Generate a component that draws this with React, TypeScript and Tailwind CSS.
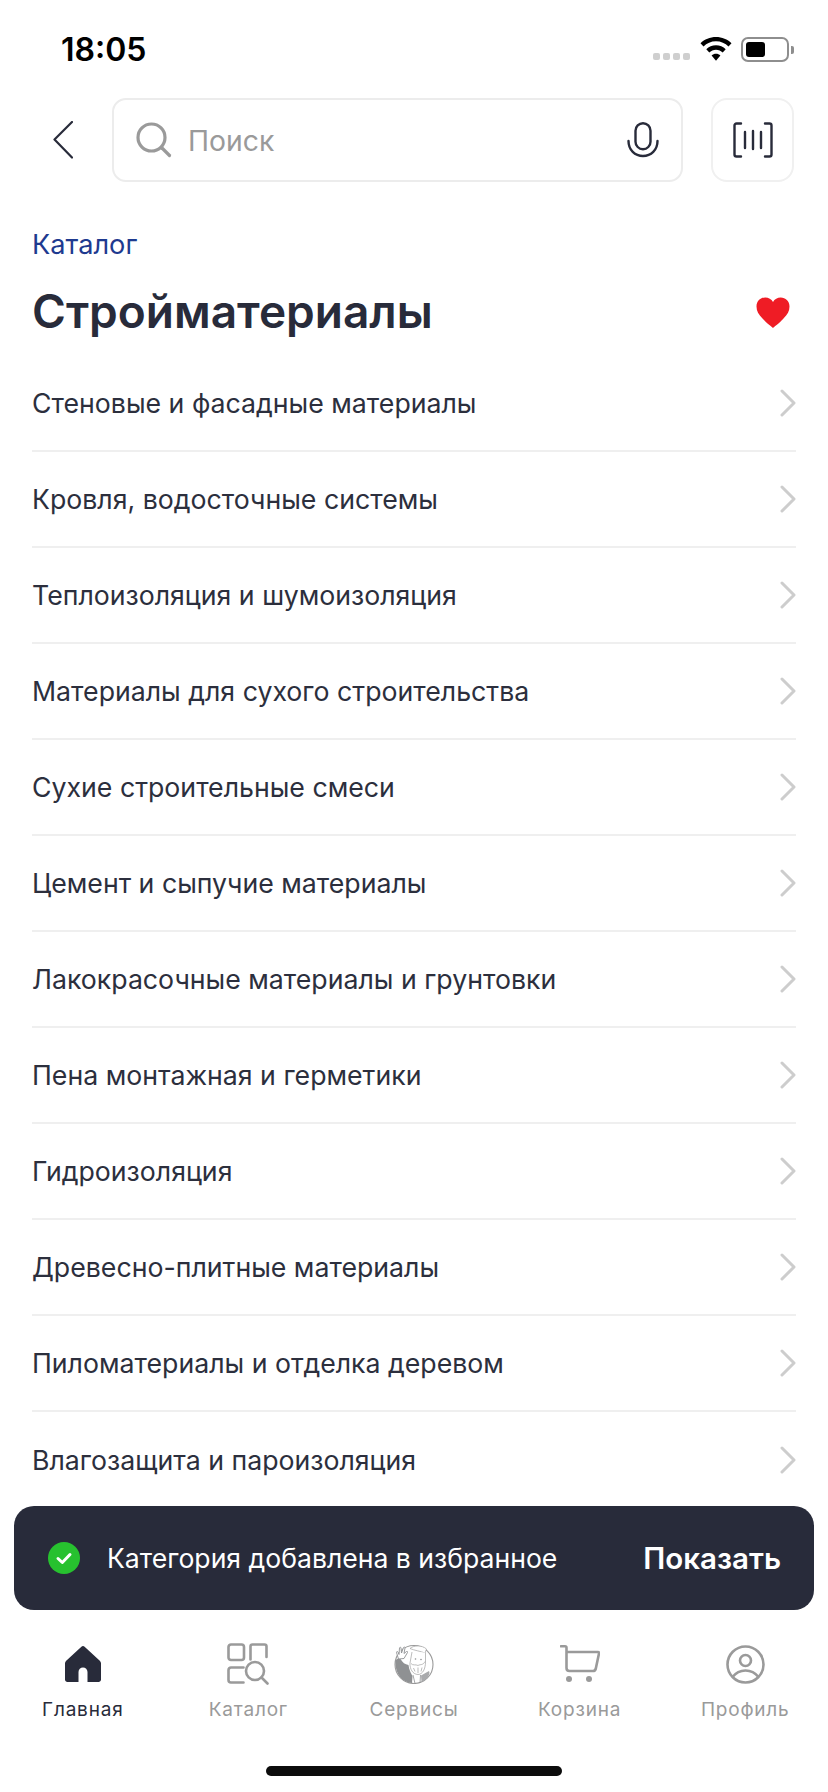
const categories = [
  "Стеновые и фасадные материалы",
  "Кровля, водосточные системы",
  "Теплоизоляция и шумоизоляция",
  "Материалы для сухого строительства",
  "Сухие строительные смеси",
  "Цемент и сыпучие материалы",
  "Лакокрасочные материалы и грунтовки",
  "Пена монтажная и герметики",
  "Гидроизоляция",
  "Древесно-плитные материалы",
  "Пиломатериалы и отделка деревом",
  "Влагозащита и пароизоляция",
]

function StatusBar() {
  return (
    <div className="flex h-[98px] shrink-0 items-start justify-between pl-[61px] pr-[34px] pt-[30px]">
      <span className="text-[32px] leading-[40px] font-semibold text-black">18:05</span>
      <div className="flex items-start pt-[7px]">
        <div className="mt-[16px] mr-[10px] flex gap-[3px]">
          <span className="h-[7px] w-[7px] rounded-[2px] bg-[#cfcfcf]" />
          <span className="h-[7px] w-[7px] rounded-[2px] bg-[#cfcfcf]" />
          <span className="h-[7px] w-[7px] rounded-[2px] bg-[#cfcfcf]" />
          <span className="h-[7px] w-[7px] rounded-[2px] bg-[#cfcfcf]" />
        </div>
        <svg width="32" height="25" viewBox="0 0 32 25" className="mr-[9px]">
          <path d="M16 0C10 0 4.500 2.300 0.500 6.200L3.500 9.500C6.700 6.300 11.100 4.300 16 4.300C20.900 4.300 25.300 6.300 28.500 9.500L31.500 6.200C27.500 2.300 22 0 16 0Z" fill="#000" />
          <path d="M16 8.300C12.200 8.300 8.800 9.800 6.300 12.300L9.300 15.500C11 13.800 13.400 12.700 16 12.700C18.600 12.700 21 13.800 22.700 15.500L25.700 12.300C23.200 9.800 19.800 8.300 16 8.300Z" fill="#000" />
          <path d="M16 16.700C14.300 16.700 12.800 17.300 11.600 18.500L16 23.700L20.400 18.500C19.200 17.300 17.700 16.700 16 16.700Z" fill="#000" />
        </svg>
        <div className="flex items-center">
          <div className="flex h-[25px] w-[48px] rounded-[7px] border-2 border-[#8e8e8e] p-[3px]">
            <div className="h-full w-[19px] rounded-[3px] bg-black" />
          </div>
          <div className="ml-[2px] h-[8px] w-[3px] rounded-r-[2px] bg-[#8e8e8e]" />
        </div>
      </div>
    </div>
  )
}

function SearchHeader() {
  return (
    <div className="flex shrink-0 items-center pl-[53px] pr-[34px]">
      <svg width="20" height="38" viewBox="0 0 20 38" fill="none" className="mr-[39px] shrink-0">
        <path d="M19 1L1.500 18.500L19 36.500" stroke="#282b3a" strokeWidth="2.200" strokeLinecap="round" strokeLinejoin="round" />
      </svg>
      <div className="flex h-[84px] w-[571px] items-center rounded-[14px] border-2 border-[#ececec] pl-[22px] pr-[22px]">
        <svg width="36" height="36" viewBox="0 0 36 36" fill="none" className="mr-[16px] shrink-0">
          <circle cx="15.500" cy="15.500" r="13.500" stroke="#9a9a9a" strokeWidth="3.200" />
          <path d="M26 26L33.500 33.500" stroke="#9a9a9a" strokeWidth="3.200" strokeLinecap="round" />
        </svg>
        <span className="flex-1 translate-y-[1px] text-[28.300px] leading-[36px] text-[#9a9a9a]">Поиск</span>
        <svg width="32" height="36" viewBox="0 0 32 36" fill="none" className="shrink-0">
          <rect x="8.500" y="1.200" width="15" height="26" rx="7.500" stroke="#282b3a" strokeWidth="2.400" />
          <path d="M1.500 19C1.500 28 8 34 16 34C24 34 30.500 28 30.500 19" stroke="#282b3a" strokeWidth="2.400" strokeLinecap="round" />
        </svg>
      </div>
      <div className="ml-[28px] flex h-[84px] w-[83px] items-center justify-center rounded-[16px] border-2 border-[#f0f0f0]">
        <svg width="40" height="36" viewBox="0 0 40 36" fill="none">
          <path d="M8 1.500H3.500C2.400 1.500 1.500 2.400 1.500 3.500V32.500C1.500 33.600 2.400 34.500 3.500 34.500H8" stroke="#282b3a" strokeWidth="2.400" strokeLinecap="round" />
          <path d="M32 1.500H36.500C37.600 1.500 38.500 2.400 38.500 3.500V32.500C38.500 33.600 37.600 34.500 36.500 34.500H32" stroke="#282b3a" strokeWidth="2.400" strokeLinecap="round" />
          <path d="M12 10V26M20 9V27M28 10V26" stroke="#282b3a" strokeWidth="2.400" strokeLinecap="round" />
        </svg>
      </div>
    </div>
  )
}

function RowChevron() {
  return (
    <svg width="16" height="28" viewBox="0 0 16 28" fill="none" className="shrink-0">
      <path d="M2 2L14 14L2 26" stroke="#cdcdcd" strokeWidth="3" strokeLinecap="round" strokeLinejoin="round" />
    </svg>
  )
}

function HomeIcon() {
  return (
    <svg width="36" height="36" viewBox="0 0 36 36">
      <path
        fillRule="evenodd"
        d="M16.400 0.700C17.300 -0.200 18.700 -0.200 19.600 0.700L34.800 14.800C35.600 15.500 36 16.400 36 17.400V33.500C36 34.900 34.900 36 33.500 36H22.500V26C22.500 23.500 20.500 21.500 18 21.500C15.500 21.500 13.500 23.500 13.500 26V36H2.500C1.100 36 0 34.900 0 33.500V17.400C0 16.400 0.400 15.500 1.200 14.800Z"
        fill="#282b3a"
      />
    </svg>
  )
}

function CatalogIcon() {
  return (
    <svg width="42" height="42" viewBox="0 0 42 42" fill="none" stroke="#9a9a9a" strokeWidth="2.600">
      <rect x="1.500" y="1.500" width="15.500" height="15.500" rx="2.500" />
      <path d="M23.500 16.500V3.500C23.500 2.400 24.400 1.500 25.500 1.500H37.500C38.600 1.500 39.500 2.400 39.500 3.500V14" strokeLinecap="round" />
      <path d="M16.500 24.500H4C2.600 24.500 1.500 25.600 1.500 27V37C1.500 38.400 2.600 39.500 4 39.500H16.500" strokeLinecap="round" />
      <circle cx="28" cy="28" r="9" />
      <path d="M34.500 34.500L40.500 40.500" strokeLinecap="round" />
    </svg>
  )
}

function ServicesIcon() {
  return (
    <svg width="40" height="40" viewBox="0 0 40 40" fill="none">
      <circle cx="20" cy="20.500" r="19" stroke="#9a9a9a" strokeWidth="1.100" fill="#fff" />
      <path d="M1.300 17C2.500 15 4 14 6.500 15C8.500 18.500 11 20.500 14.500 21C15 26 17.500 30 18.500 32L18 39C9 38.500 1 31 1.300 17Z" fill="#8f9193" />
      <path d="M27 31.500L35 27C37 30 32 37 27.500 38Z" fill="#a9aaac" />
      <path d="M4.500 15L2.500 8.500C2.300 7.500 3.500 7 4 8L5 10.500L5.500 4C5.700 3 7 3 7 4L7.500 9L9.500 3.500C10 2.700 11 3 11 4L10 9.500L12.500 7.500C13.200 7 14 7.800 13.500 8.500L10 14.500Z" fill="#fff" stroke="#8f9193" strokeWidth="0.900" strokeLinejoin="round" />
      <path d="M16 4.500C20 1 28 1 32.500 5L31 9C26 7 20.500 6.500 16 4.500Z" fill="#fff" stroke="#a0a0a0" strokeWidth="0.700" />
      <path d="M18 8L16 19C15.500 25 19 30.500 24 30.500C28.500 30.500 31.500 25 31.500 18L31.500 8.500" fill="#fff" stroke="#a0a0a0" strokeWidth="0.700" />
      <path d="M17 19.500C19 22 21.500 20 24 21.500C26.500 20 29 21.500 31 17.500M19.500 24L21 27.500M24 23.500V29M28 23.500L27 27.500" stroke="#a0a0a0" strokeWidth="0.700" />
      <circle cx="21.500" cy="15" r="0.800" fill="#8f9193" />
      <circle cx="27" cy="15.500" r="0.800" fill="#8f9193" />
      <path d="M19 31L21 39.500M26.500 31L26 39" stroke="#8f9193" strokeWidth="0.800" />
    </svg>
  )
}

function CartIcon() {
  return (
    <svg width="40" height="38" viewBox="0 0 40 38" fill="none">
      <path d="M1 1.300H5C6 1.300 6.500 1.800 6.500 2.800V23C6.500 25 7.500 26 9.500 26H33C34.500 26 35.300 25.200 35.700 24L39 8.500C39.200 7.500 38.700 7 38 7H6.500" stroke="#9a9a9a" strokeWidth="2.600" strokeLinecap="round" strokeLinejoin="round" />
      <circle cx="9" cy="34" r="3" fill="#9a9a9a" />
      <circle cx="29" cy="34" r="3" fill="#9a9a9a" />
    </svg>
  )
}

function ProfileIcon() {
  return (
    <svg width="39" height="39" viewBox="0 0 39 39" fill="none" stroke="#9a9a9a" strokeWidth="2.600">
      <circle cx="19.500" cy="19.500" r="18" />
      <circle cx="19.500" cy="15.500" r="5.500" />
      <path d="M6.500 32C10 27.500 14.500 25.500 19.500 25.500C24.500 25.500 29 27.500 32.500 32" />
    </svg>
  )
}

const tabs = [
  { label: "Главная", icon: <HomeIcon />, active: true },
  { label: "Каталог", icon: <CatalogIcon />, active: false },
  { label: "Сервисы", icon: <ServicesIcon />, active: false },
  { label: "Корзина", icon: <CartIcon />, active: false },
  { label: "Профиль", icon: <ProfileIcon />, active: false },
]

export default function App() {
  return (
    <div className="relative flex h-[1792px] w-[828px] flex-col overflow-hidden bg-white font-['Inter',sans-serif]">
      <StatusBar />
      <SearchHeader />

      <div className="flex-1 px-[32px]">
        <div className="mt-[46px] text-[27.200px] leading-[34px] text-[#1e3a8f]">Каталог</div>
        <div className="mt-[21px] flex items-center justify-between">
          <h1 className="text-[46px] leading-[56px] font-semibold text-[#282b3a]">Стройматериалы</h1>
          <svg width="34" height="31" viewBox="0 0 34 31" className="mr-[6px] translate-y-[1px]">
            <path d="M17 31C16 30 11 26.500 6.500 21.500C2.500 17.500 0.500 14 0.500 9.500C0.500 4 4.500 0.500 9.300 0.500C12.500 0.500 15.500 2 17 5C18.500 2 21.500 0.500 24.700 0.500C29.500 0.500 33.500 4 33.500 9.500C33.500 14 31.500 17.500 27.500 21.500C23 26.500 18 30 17 31Z" fill="#ef1c25" />
          </svg>
        </div>
        <ul className="mt-[17px]">
          {categories.map((name, i) => (
            <li
              key={name}
              className={`flex h-[96px] items-center justify-between ${i < categories.length - 1 ? "border-b-2 border-[#efefef]" : ""}`}
            >
              <span className="text-[26.700px] leading-[36px] text-[#2c2f3d]">{name}</span>
              <RowChevron />
            </li>
          ))}
        </ul>
      </div>

      <div className="absolute left-[14px] top-[1506px] flex h-[104px] w-[800px] items-center rounded-[20px] bg-[#282b3a] pl-[34px] pr-[33px]">
        <svg width="32" height="32" viewBox="0 0 32 32" className="mr-[27px] shrink-0">
          <circle cx="16" cy="16" r="16" fill="#27c12f" />
          <path d="M10 16.500L14.300 20.500L22 12.500" stroke="#fff" strokeWidth="3" fill="none" strokeLinecap="round" strokeLinejoin="round" />
        </svg>
        <span className="flex-1 text-[26.600px] leading-[34px] text-white">Категория добавлена в избранное</span>
        <span className="text-[29.500px] leading-[36px] font-semibold text-white">Показать</span>
      </div>

      <nav className="grid h-[149px] shrink-0 grid-cols-5">
        {tabs.map((tab) => (
          <div key={tab.label} className="flex flex-col items-center">
            <div className="flex h-[42px] items-center justify-center">{tab.icon}</div>
            <span
              className={`mt-[13px] text-[19px] leading-[24px] tracking-[0.8px] ${tab.active ? "text-[#282b3a]" : "text-[#9a9a9a]"}`}
            >
              {tab.label}
            </span>
          </div>
        ))}
      </nav>

      <div className="absolute bottom-[16px] left-[266px] h-[10px] w-[296px] rounded-full bg-[#0c0c0c]" />
    </div>
  )
}
